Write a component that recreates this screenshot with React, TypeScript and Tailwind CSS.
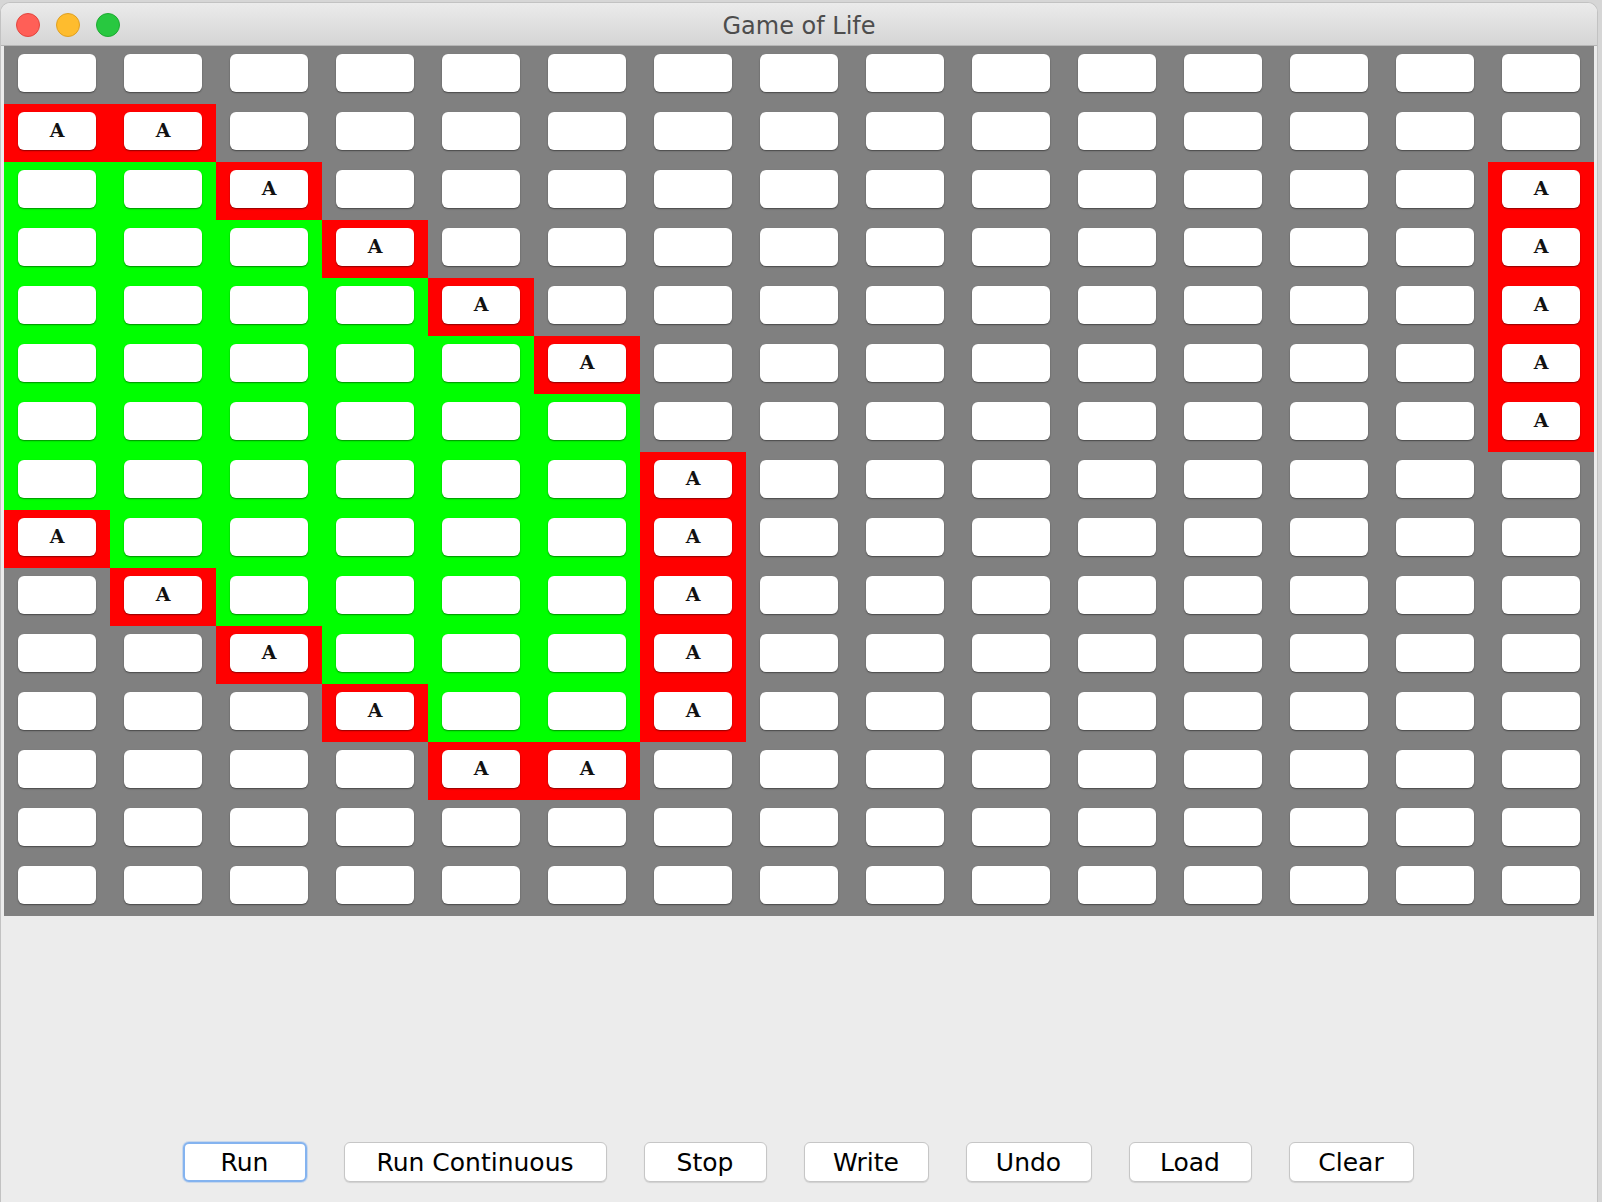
import React from 'react';

const ROWS = 15;
const COLS = 15;

const alive = new Set([
  '1,0', '1,1', '2,2', '3,3', '4,4', '5,5',
  '2,14', '3,14', '4,14', '5,14', '6,14',
  '7,6', '8,6', '9,6', '10,6', '11,6',
  '8,0', '9,1', '10,2', '11,3', '12,4', '12,5',
]);

// green span per row: [from, to]
const region: Record<number, [number, number]> = {
  2: [0, 1],
  3: [0, 2],
  4: [0, 3],
  5: [0, 4],
  6: [0, 5],
  7: [0, 5],
  8: [1, 5],
  9: [2, 5],
  10: [3, 5],
  11: [4, 5],
};

const buttons = [
  { label: 'Run', w: 'w-[124px]', focus: true },
  { label: 'Run Continuous', w: 'w-[263px]' },
  { label: 'Stop', w: 'w-[123px]' },
  { label: 'Write', w: 'w-[125px]' },
  { label: 'Undo', w: 'w-[126px]' },
  { label: 'Load', w: 'w-[123px]' },
  { label: 'Clear', w: 'w-[125px]' },
];

const Cell = ({ r, c }: { r: number; c: number }) => {
  const on = alive.has(`${r},${c}`);
  const span = region[r];
  const green = !on && span && c >= span[0] && c <= span[1];
  const bg = on ? 'bg-[#ff0000]' : green ? 'bg-[#00ff00]' : 'bg-[#808080]';
  return (
    <div className={`${bg} pt-[8px] pb-[12px] px-[14px]`}>
      <div className="h-[38px] w-[78px] rounded-[6px] bg-white shadow-[0_1px_1.5px_rgba(0,0,0,0.45)] flex items-center justify-center font-['DejaVu_Serif',serif] font-semibold text-[19px] text-[#111] leading-none pb-[2px]">
        {on ? 'A' : ''}
      </div>
    </div>
  );
};

const App = () => {
  return (
    <div className="w-[1602px] h-[1202px] bg-[#d6d6d6] overflow-hidden">
      <div className="mt-[2px] w-[1598px] h-[1200px] rounded-t-[10px] border-x border-t border-[#c2c2c2] bg-[#ececec] flex flex-col overflow-hidden">
        <div className="relative h-[43px] shrink-0 bg-gradient-to-b from-[#ebebeb] to-[#d5d5d5] border-b border-[#b5b5b5] flex items-center justify-center">
          <div className="absolute left-[15px] top-[10px] flex gap-[16px]">
            <span className="w-[24px] h-[24px] rounded-full bg-[#ff5f57] border border-[#e2463f]" />
            <span className="w-[24px] h-[24px] rounded-full bg-[#febc2e] border border-[#dfa023]" />
            <span className="w-[24px] h-[24px] rounded-full bg-[#28c840] border border-[#1eaa32]" />
          </div>
          <span className="mt-[4px] font-['DejaVu_Sans',sans-serif] text-[24px] text-[#4d4d4d] leading-none">Game of Life</span>
        </div>

        <div className="pl-[3px] shrink-0">
          <div className="grid grid-cols-[repeat(15,106px)] grid-rows-[repeat(15,58px)] w-[1590px]">
            {Array.from({ length: ROWS }).map((_, r) =>
              Array.from({ length: COLS }).map((_, c) => <Cell key={`${r}-${c}`} r={r} c={c} />)
            )}
          </div>
        </div>

        <div className="flex-1 flex items-end justify-center gap-[37px] pb-[20px] pr-[2px]">
          {buttons.map((b) => (
            <button
              key={b.label}
              className={`${b.w} h-[40px] rounded-[6px] bg-white font-['DejaVu_Sans',sans-serif] text-[25px] text-black leading-none ${
                b.focus
                  ? 'border-2 border-[#84b3ef] shadow-[0_0_0_1px_rgba(132,179,239,0.35)]'
                  : 'border border-[#c6c6c6] shadow-[0_1px_1px_rgba(0,0,0,0.12)]'
              }`}
            >
              {b.label}
            </button>
          ))}
        </div>
      </div>
    </div>
  );
};

export default App;
